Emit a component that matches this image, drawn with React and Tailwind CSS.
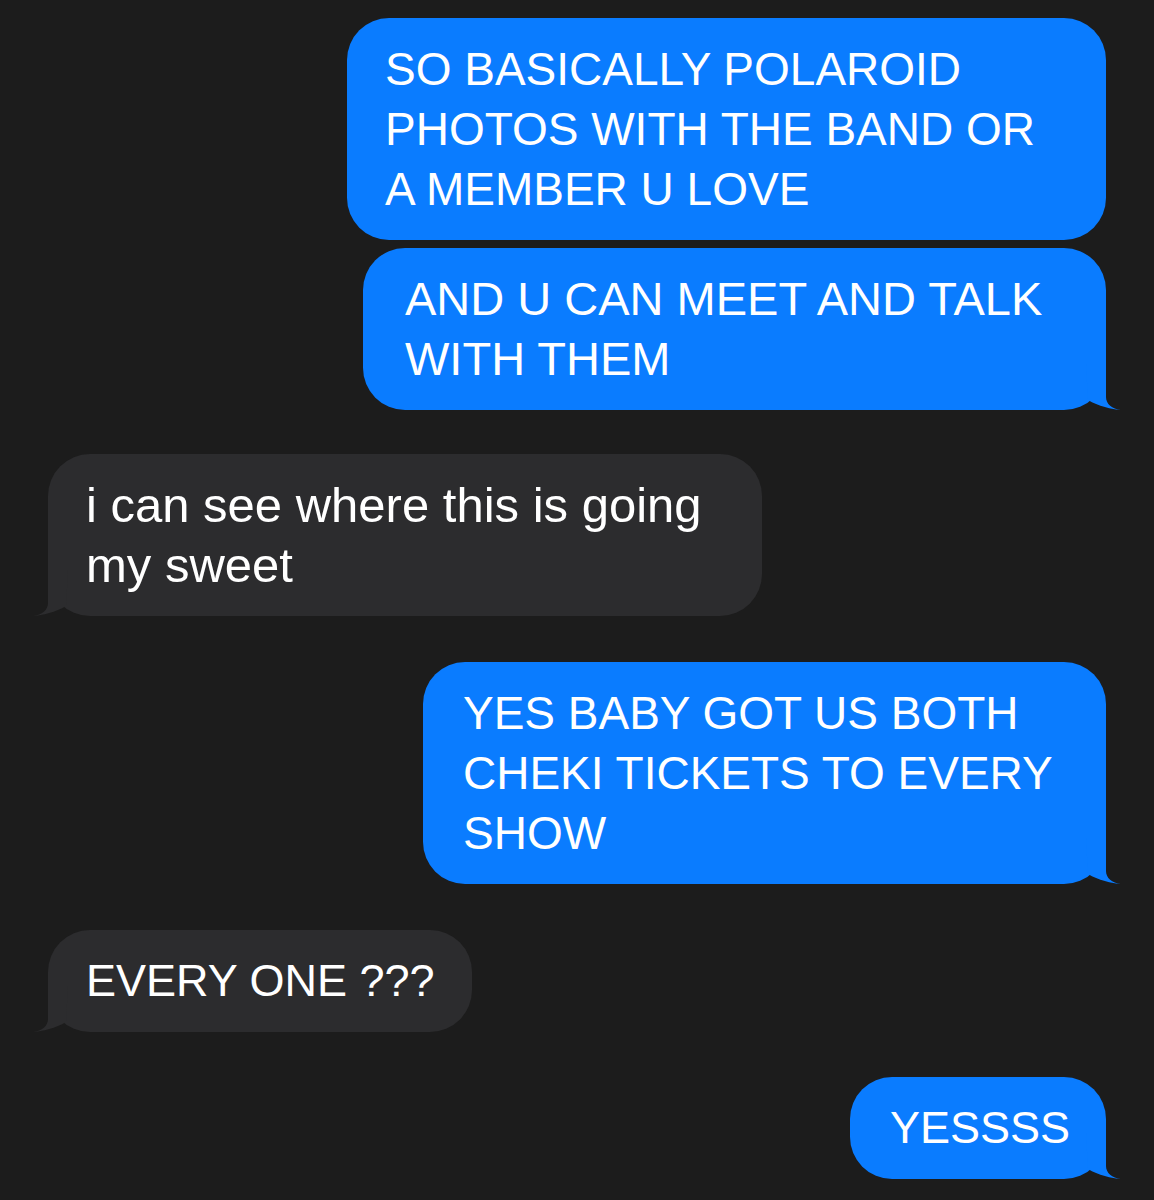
const BLUE = "#0a7cff";
const GRAY = "#2c2c2e";

function Tail({ side, color }) {
  // drawn for the right side, mirrored for the left
  return (
    <svg
      width="46"
      height="46"
      viewBox="0 0 46 46"
      className={
        side === "right"
          ? "absolute bottom-0 right-[-16px]"
          : "absolute bottom-0 left-[-16px] -scale-x-100"
      }
    >
      <path
        d="M10 0 L30 0 L30 33 C30 40 36 45 45 46 C36 45.5 22 42 12 36 Z"
        fill={color}
      />
    </svg>
  );
}

function Bubble({ side, tail, width, pad, size, lines }) {
  const color = side === "right" ? BLUE : GRAY;
  return (
    <div
      className={`relative rounded-[42px] py-[21px] text-white leading-[60px] ${width} ${pad} ${size} ${
        side === "right" ? "self-end bg-[#0a7cff]" : "self-start bg-[#2c2c2e]"
      }`}
    >
      {lines.map((l, i) => (
        <div key={i} className="relative z-10 whitespace-nowrap">
          {l}
        </div>
      ))}
      {tail && <Tail side={side} color={color} />}
    </div>
  );
}

export default function App() {
  return (
    <div className="min-h-[1200px] bg-[#1c1c1c] px-12 pt-[18px] font-['Liberation_Sans',Arial,sans-serif]">
      <div className="flex flex-col">
        <Bubble
          side="right"
          width="w-[759px]"
          pad="pl-[38px]"
          size="text-[46px]"
          lines={["SO BASICALLY POLAROID", "PHOTOS WITH THE BAND OR", "A MEMBER U LOVE"]}
        />
        <div className="h-2" />
        <Bubble
          side="right"
          tail
          width="w-[743px]"
          pad="pl-[42px]"
          size="text-[47px]"
          lines={["AND U CAN MEET AND TALK", "WITH THEM"]}
        />
        <div className="h-[44px]" />
        <Bubble
          side="left"
          tail
          width="w-[714px]"
          pad="pl-[38px]"
          size="text-[49px]"
          lines={["i can see where this is going", "my sweet"]}
        />
        <div className="h-[46px]" />
        <Bubble
          side="right"
          tail
          width="w-[683px]"
          pad="pl-[40px]"
          size="text-[46px]"
          lines={["YES BABY GOT US BOTH", "CHEKI TICKETS TO EVERY", "SHOW"]}
        />
        <div className="h-[46px]" />
        <Bubble
          side="left"
          tail
          width="w-[424px]"
          pad="pl-[38px]"
          size="text-[45px]"
          lines={["EVERY ONE ???"]}
        />
        <div className="h-[45px]" />
        <Bubble
          side="right"
          tail
          width="w-[256px]"
          pad="pl-[40px]"
          size="text-[45px]"
          lines={["YESSSS"]}
        />
      </div>
    </div>
  );
}
